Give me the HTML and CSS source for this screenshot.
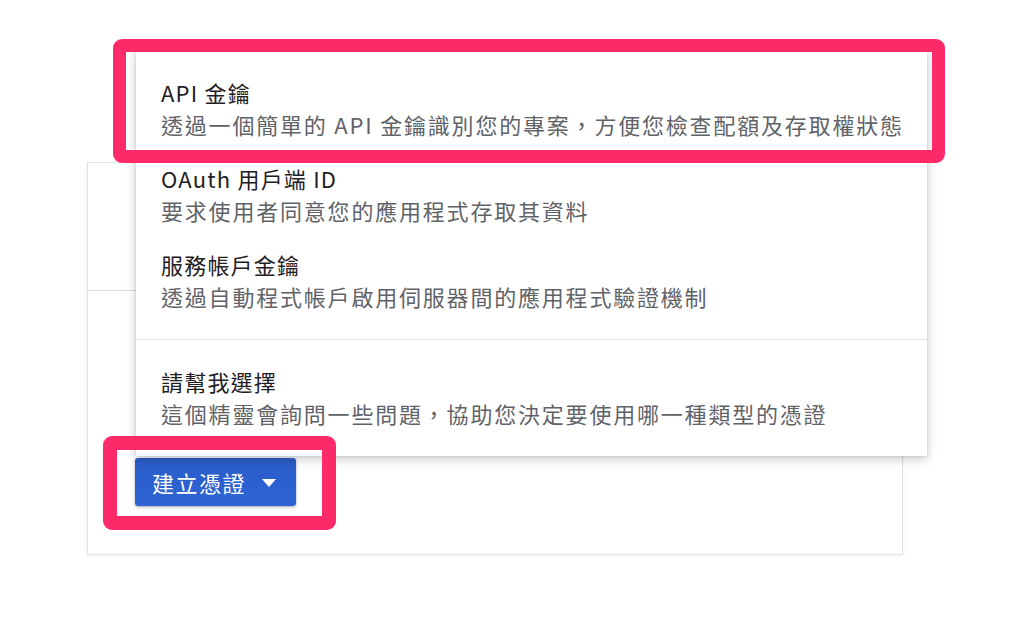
FILE: index.html
```html
<!DOCTYPE html>
<html lang="zh-Hant">
<head>
  <meta charset="UTF-8" />
  <title>建立憑證</title>
  <link rel="stylesheet" href="styles.css">
</head>
<body>
  <div class="page">
    <div class="card">
      <div class="card-head"></div>
      <div class="card-body">
        <button class="btn-crear">
          <span>建立憑證</span>
          <span class="flecha"></span>
        </button>
      </div>

      <!-- menú desplegable -->
      <div class="menu">
        <div class="grupo">
          <div class="opcion">
            <div class="titulo">API 金鑰</div>
            <div class="desc">透過一個簡單的 API 金鑰識別您的專案，方便您檢查配額及存取權狀態</div>
          </div>
          <div class="opcion">
            <div class="titulo">OAuth 用戶端 ID</div>
            <div class="desc">要求使用者同意您的應用程式存取其資料</div>
          </div>
          <div class="opcion">
            <div class="titulo">服務帳戶金鑰</div>
            <div class="desc">透過自動程式帳戶啟用伺服器間的應用程式驗證機制</div>
          </div>
        </div>
        <div class="grupo grupo-2">
          <div class="opcion">
            <div class="titulo">請幫我選擇</div>
            <div class="desc">這個精靈會詢問一些問題，協助您決定要使用哪一種類型的憑證</div>
          </div>
        </div>
      </div>
    </div>

    <!-- marcas rosas -->
    <div class="marca marca-api"></div>
    <div class="marca marca-btn"></div>
  </div>
</body>
</html>
```

FILE: styles.css
```css
* {
  margin: 0;
  padding: 0;
  box-sizing: border-box;
}

body {
  background-color: #fff;
  font-family: "Noto Sans CJK TC", "Noto Sans", sans-serif;
  width: 1024px;
  height: 628px;
  overflow: hidden;
}

.page {
  position: relative;
  padding: 162px 0 0 87px;
  height: 628px;
}

.card {
  position: relative;
  width: 816px;
  height: 393px;
  border: 1px solid #e2e3e5;
  background-color: #fff;
  box-shadow: 0 1px 3px rgba(0, 0, 0, 0.08);
}

.card-head {
  height: 128px;
  border-bottom: 1px solid #dadce0;
}

.card-body {
  padding: 167px 0 0 47px;
}

.btn-crear {
  display: flex;
  align-items: center;
  gap: 16px;
  width: 161px;
  height: 48px;
  padding: 0 0 0 17px;
  border: none;
  border-radius: 3px;
  background: linear-gradient(#2a5cc8, #2e64d4);
  box-shadow: 0 1px 3px rgba(0, 0, 0, 0.35);
  color: #fff;
  font-family: inherit;
  font-size: 22px;
  letter-spacing: 1.5px;
}

.flecha {
  width: 0;
  height: 0;
  border-left: 7.5px solid transparent;
  border-right: 7.5px solid transparent;
  border-top: 8px solid #fff;
  margin-top: 2px;
}

.menu {
  position: absolute;
  left: 48px;
  top: -114px;
  width: 791px;
  background-color: #fff;
  box-shadow: 0 3px 10px rgba(0, 0, 0, 0.22), 0 0 2px rgba(0, 0, 0, 0.12);
}

.grupo {
  padding: 16px 0;
}

.grupo-2 {
  padding-top: 14px;
  border-top: 1px solid #e0e0e0;
}

.opcion {
  padding: 11px 0 11px 25px;
}

.titulo,
.desc {
  font-size: 22px;
  line-height: 32px;
  letter-spacing: 1.8px;
  white-space: nowrap;
}

.titulo {
  color: #1f2023;
  letter-spacing: 1.2px;
}

.desc {
  color: #5f6368;
}

/* recuadros de resaltado */
.marca {
  position: absolute;
  border: 13px solid #fd2a6a;
  border-radius: 9px;
  pointer-events: none;
}

.marca-api {
  left: 113px;
  top: 39px;
  width: 832px;
  height: 124px;
}

.marca-btn {
  left: 103px;
  top: 436px;
  width: 233px;
  height: 94px;
  border-width: 14px;
}
```
